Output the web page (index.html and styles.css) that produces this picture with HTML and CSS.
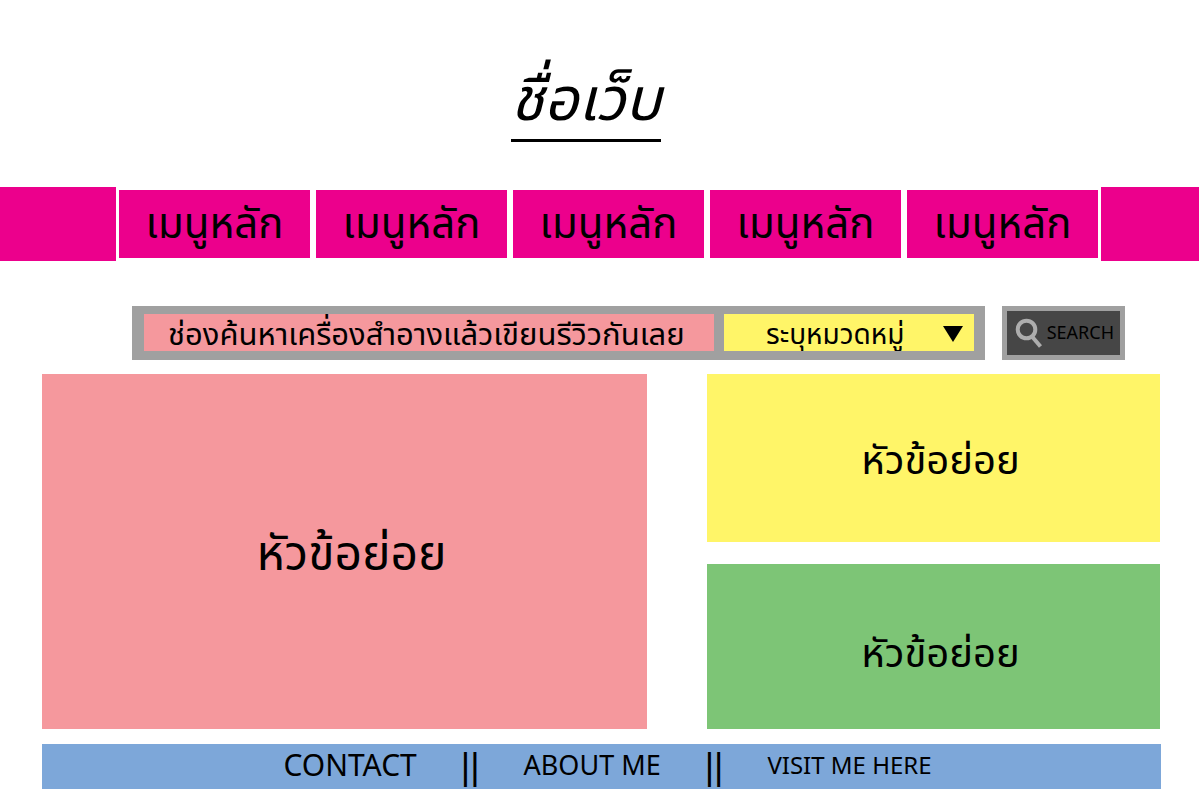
FILE: index.html
```html
<!DOCTYPE html>
<html lang="th">
<head>
<meta charset="utf-8">
<title>ชื่อเว็บ</title>
<link rel="stylesheet" href="styles.css">
</head>
<body>
<header class="site-header"><h1 class="site-title">ชื่อเว็บ</h1></header>
<nav class="menu">
  <span class="menu-end"></span>
  <div class="menu-items">
    <a class="menu-item" href="#">เมนูหลัก</a>
    <a class="menu-item" href="#">เมนูหลัก</a>
    <a class="menu-item" href="#">เมนูหลัก</a>
    <a class="menu-item" href="#">เมนูหลัก</a>
    <a class="menu-item" href="#">เมนูหลัก</a>
  </div>
  <span class="menu-end"></span>
</nav>
<form class="search">
  <div class="search-fields">
    <input class="search-text" type="text" aria-label="ค้นหา" value="ช่องค้นหาเครื่องสำอางแล้วเขียนรีวิวกันเลย">
    <div class="category">
      <select class="category-select" aria-label="หมวดหมู่"><option>ระบุหมวดหมู่</option></select>
      <svg class="category-arrow" viewBox="0 0 20 16" aria-hidden="true"><path d="M0 0H20L10 16Z"/></svg>
    </div>
  </div>
  <button class="search-button" type="button">
    <svg class="search-icon" viewBox="0 0 28 30" aria-hidden="true"><circle cx="11.500" cy="11.500" r="8.800"/><path d="M17 18.500L25.500 28.500"/></svg>
    <span>SEARCH</span>
  </button>
</form>
<main class="topics">
  <section class="topic topic-main"><h2>หัวข้อย่อย</h2></section>
  <section class="topic topic-top"><h2>หัวข้อย่อย</h2></section>
  <section class="topic topic-bottom"><h2>หัวข้อย่อย</h2></section>
</main>
<footer class="footer">
  <a class="contact" href="#">CONTACT</a>
  <span class="bars">||</span>
  <a class="about" href="#">ABOUT ME</a>
  <span class="bars">||</span>
  <a class="visit" href="#">VISIT ME HERE</a>
</footer>
</body>
</html>
```
FILE: styles.css
```css
* { box-sizing: border-box; }
body {
  margin: 0;
  background: #fff;
  color: #000;
  font-family: "Noto Sans Thai", "Noto Sans", "Open Sans", sans-serif;
}
a { color: inherit; text-decoration: none; }
h1, h2 { margin: 0; font-weight: 400; }
.site-header { display: flex; justify-content: center; padding: 65px 28px 45px 0; }
.site-title { font-size: 60px; line-height: 74px; font-style: italic; border-bottom: 3px solid #000; }
.menu { display: grid; grid-template-columns: 116fr 979fr 98fr; column-gap: 3px; align-items: center; padding-right: 1px; }
.menu-items { display: grid; grid-template-columns: repeat(5, 1fr); column-gap: 6px; }
.menu-end { height: 74px; background: #ec008c; }
.menu-item { height: 68px; padding-top: 2px; font-size: 42px; line-height: 66px; text-align: center; background: #ec008c; }
.search { display: flex; gap: 17px; margin: 45px 75px 0 132px; height: 54px; }
.search-fields { flex: 1; display: flex; gap: 10px; padding: 8px 11px 9px 12px; background: #a0a0a0; }
.search-text { flex: 1; min-width: 0; padding: 6px 24px 0; border: 0; font: inherit; font-size: 31px; background: #f5989d; }
.category { position: relative; width: 250px; }
.category-select { width: 100%; height: 100%; padding: 0 42px; border: 0; appearance: none; font: inherit; font-size: 28px; color: #000; background: #fff568; }
.category-arrow { position: absolute; right: 11px; top: 12px; width: 20px; height: 16px; pointer-events: none; }
.search-button { display: flex; align-items: center; justify-content: space-between; width: 123px; padding: 0 6px 0 8px; border: 5px solid #a0a0a0; font: inherit; font-size: 18px; background: #464646; color: #000; }
.search-icon { width: 28px; height: 30px; fill: none; stroke: #adadad; stroke-width: 4px; }
.topics { display: grid; grid-template-columns: 605fr 453fr; grid-template-rows: 168px 165px; gap: 22px 60px; margin: 14px 40px 15px 42px; }
.topic { display: flex; align-items: center; justify-content: center; padding: 8px 0 0 14px; }
.topic h2 { font-size: 40px; }
.topic-main { grid-row: span 2; background: #f5989d; }
.topic-main h2 { font-size: 48px; }
.topic-top { background: #fff568; }
.topic-bottom { padding-top: 16px; background: #7dc576; }
.footer { display: flex; justify-content: center; align-items: center; gap: 44px; height: 45px; margin: 0 39px 0 42px; padding-left: 12px; background: #7da7d9; }
.contact { font-size: 30px; }
.about { font-size: 27px; }
.visit { font-size: 24px; }
.bars { font-family: "Liberation Sans", sans-serif; font-size: 36px; }
```
